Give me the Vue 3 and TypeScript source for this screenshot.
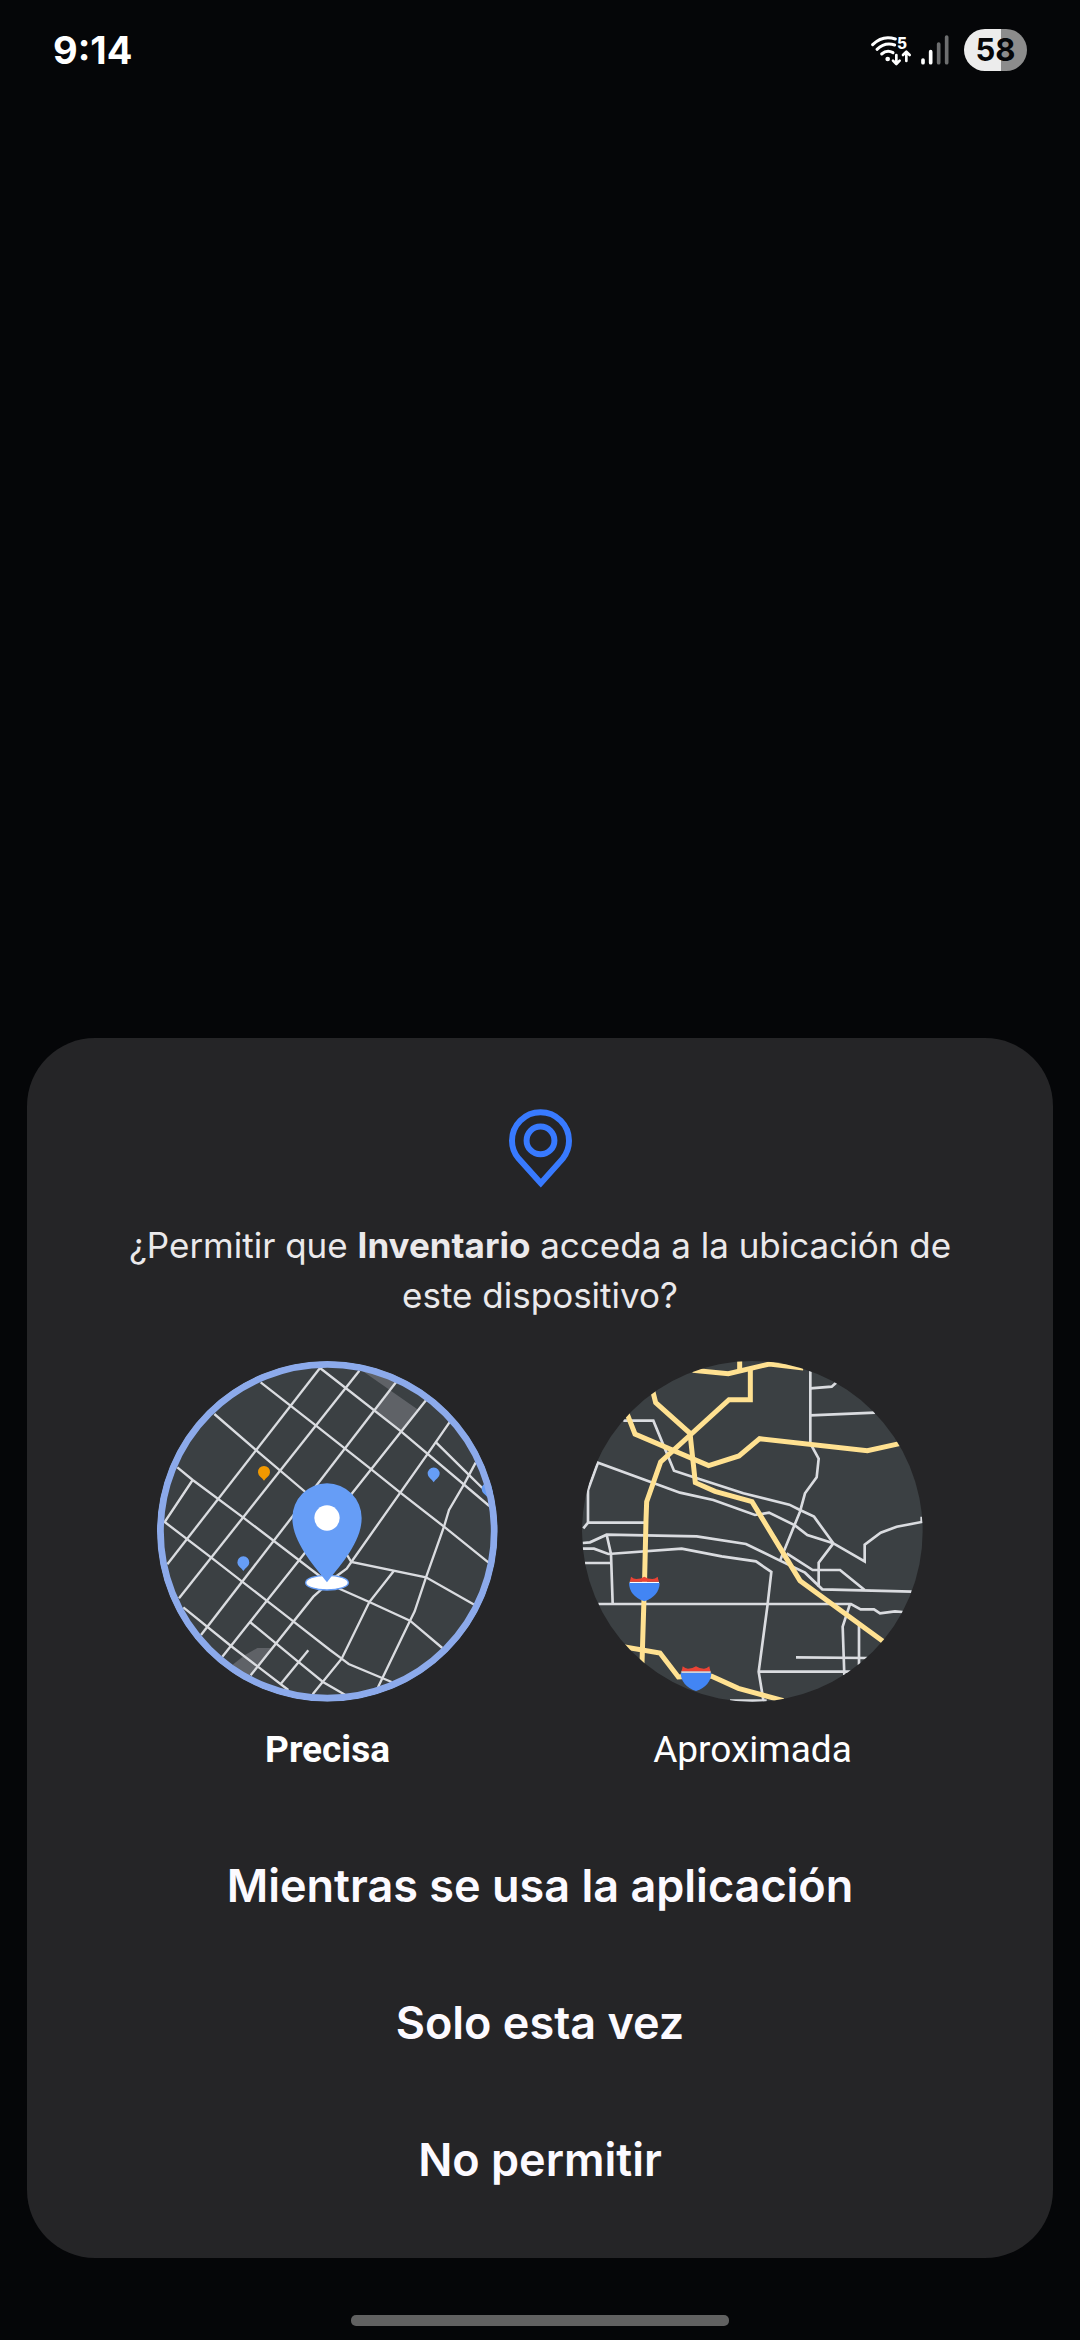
<script setup lang="ts">
import { ref } from 'vue'

type Accuracy = 'precise' | 'coarse'

const accuracy = ref<Accuracy>('precise')
const batteryLevel = 58
const actions: string[] = ['Mientras se usa la aplicación', 'Solo esta vez', 'No permitir']

const streets: string[] = [
  '510,54 52,643',
  '628,62 87,745',
  '738,97 153,855',
  '828,151 604,433 446,632 217,920',
  '900,215 834,310 604,636 590,656 560,678 490,740 302,976',
  '732,662 658,756 575,926 488,1033',
  '977,338 942,403 897,480 882,530 828,682 794,784 780,812 684,1012',
  '475,901 392,1002',
  '510,54 587,114 753,244 1018,468',
  '332,97 498,227 664,358 751,428 882,530 1015,637',
  '193,192 319,301 465,425 590,613 604,636 828,682 973,764',
  '82,352 128,390 280,503 505,675 570,717 658,756 780,812 877,894',
  '128,390 44,516 184,623 350,752 430,814 540,900 575,926 596,942 725,996',
  '300,816 447,937 519,996 585,1034',
  '100,772 243,888 415,1020',
  '858,277 956,374 997,414',
]

const roads: string[] = [
  '721,60 721,280 746,326 740,382 705,430 690,485 630,632',
  '721,115 785,110 800,97',
  '721,196 915,188',
  '160,212 250,212 312,362 360,378 520,430 658,464 690,480 732,500 790,580 884,634 884,584 932,548 980,530 1055,516 1055,500',
  '790,580 746,638 746,710',
  '40,535 54,518 54,420 84,338 330,428 430,450 555,495 597,488 675,526 712,555 790,580',
  '54,518 225,518',
  '38,579 60,577 110,554 380,559 528,582 630,632 705,668 757,718 1025,725',
  '650,610 728,660 810,660 884,720',
  '38,596 72,596 115,612 335,596 455,619 558,634 604,666 592,770 566,965 580,1050',
  '110,554 123,612 128,760',
  '45,639 125,639',
  '85,762 843,762 872,778 912,778 930,790 975,784 998,786',
  '840,762 818,830 823,975',
  '867,825 867,945',
  '678,922 892,924',
  '566,965 842,965',
  '480,1052 590,1052',
]

const highways: string[] = [
  '368,61 475,71 598,42 700,54',
  '509,30 509,62',
  '541,56 541,149 477,149 272,336 230,455 228,510 224,680 216,940',
  '248,122 257,158 360,250 376,398 435,424 546,455 690,692 945,878',
  '170,188 195,252 416,347 507,318 569,266 892,302 992,280',
  '160,890 270,909 325,981 378,978 425,979 505,1015 640,1052',
]

const shields: string[] = ['translate(177 680)', 'translate(332 949)']
const smallPins = [
  { x: 342, y: 367, color: '#f29900' },
  { x: 851, y: 372, color: '#669df6' },
  { x: 280, y: 638, color: '#669df6' },
  { x: 1013, y: 418, color: '#669df6' },
]
</script>

<template>
  <div class="screen">
    <header class="status">
      <time class="clock">9:14</time>
      <div class="indicators">
        <svg class="wifi" viewBox="95 75 123 93" aria-label="Wi-Fi">
          <g fill="none" stroke="#fff" stroke-width="9" stroke-linecap="round">
            <path d="M100 104Q130 74 168 87" />
            <path d="M113 118Q137 95 166 105" />
            <path d="M127 132Q143 118 161 128" />
          </g>
          <circle cx="145" cy="147" r="7" fill="#fff" />
          <g fill="none" stroke="#fff" stroke-width="8" stroke-linecap="round" stroke-linejoin="round">
            <path d="M171 135V161M161 152L171 162L181 152" />
            <path d="M201 153V127M191 135L201 125L211 135" />
          </g>
          <text x="173" y="117" class="band">5</text>
        </svg>
        <svg class="signal" viewBox="244 74 84 90" aria-label="Señal móvil">
          <g stroke-width="11" stroke-linecap="round">
            <path d="M250 149V157M273 124V157" stroke="#fff" />
            <path d="M297 101V157M321 80V157" stroke="#6d6e6f" />
          </g>
        </svg>
        <div class="battery" :style="{ '--level': batteryLevel + '%' }">{{ batteryLevel }}</div>
      </div>
    </header>

    <main class="sheet">
      <svg class="place" viewBox="84 58 190 237" aria-hidden="true">
        <g fill="none" stroke="#387aff" stroke-width="18">
          <path d="M180 281L113 207C101 193 93 176 93 153A86 86 0 0 1 265 153C265 176 257 193 246 207Z" />
          <circle cx="179" cy="152" r="42" />
        </g>
      </svg>
      <h1 class="question">¿Permitir que <b>Inventario</b> acceda a la ubicación de este dispositivo?</h1>

      <div class="options" role="radiogroup" aria-label="Precisión de la ubicación">
        <label class="option">
          <input v-model="accuracy" type="radio" name="accuracy" value="precise" />
          <svg class="map" viewBox="21 33 1023 1023" aria-hidden="true">
            <clipPath id="precise-clip"><circle cx="532" cy="544" r="511" /></clipPath>
            <g clip-path="url(#precise-clip)">
              <rect x="21" y="33" width="1023" height="1023" fill="#3b4043" />
              <path d="M630 58L802 178L753 244L673 182L738 97V50ZM240 950L285 915L322 894H368L302 976L270 1000Z" fill="#5f6267" />
              <g class="street"><polyline v-for="p in streets" :key="p" :points="p" /></g>
              <path
                v-for="p in smallPins"
                :key="p.x"
                :transform="`translate(${p.x} ${p.y})`"
                d="M0 25Q-5 17 -11 13A18 18 0 1 1 11 13Q5 17 0 25Z"
                :fill="p.color"
              />
              <ellipse cx="531" cy="698" rx="64" ry="22" fill="#fff" stroke="#669df6" stroke-width="4" />
              <path d="M531 697C495 650 427 578 427 504A104 104 0 0 1 635 504C635 578 567 650 531 697Z" fill="#669df6" />
              <circle cx="531" cy="504" r="38" fill="#fff" />
              <circle v-if="accuracy === 'precise'" cx="532" cy="544" r="501" fill="none" stroke="#8caaeb" stroke-width="21" />
            </g>
          </svg>
          <span>Precisa</span>
        </label>
        <label class="option">
          <input v-model="accuracy" type="radio" name="accuracy" value="coarse" />
          <svg class="map" viewBox="36 33 1023 1023" aria-hidden="true">
            <clipPath id="coarse-clip"><circle cx="547" cy="544" r="511" /></clipPath>
            <g clip-path="url(#coarse-clip)">
              <rect x="36" y="33" width="1023" height="1023" fill="#3b4043" />
              <g class="road"><polyline v-for="p in roads" :key="p" :points="p" /></g>
              <g class="highway"><polyline v-for="p in highways" :key="p" :points="p" /></g>
              <g v-for="s in shields" :key="s" :transform="s">
                <path d="M0 19H92Q91 58 46 74Q1 58 0 19Z" fill="#4285f4" />
                <path d="M2 15H90V19H2Z" fill="#fff" />
                <path d="M2 15Q5 8 6 0Q14 7 22 7Q36 7 46 0Q56 7 70 7Q78 7 86 0Q87 8 90 15Z" fill="#ea4335" />
              </g>
              <circle v-if="accuracy === 'coarse'" cx="547" cy="544" r="501" fill="none" stroke="#8caaeb" stroke-width="21" />
            </g>
          </svg>
          <span>Aproximada</span>
        </label>
      </div>

      <div class="actions">
        <button v-for="label in actions" :key="label" type="button">{{ label }}</button>
      </div>
    </main>

    <div class="home-bar"></div>
  </div>
</template>

<style>
body {
  background: #050608;
}
</style>

<style scoped>
.screen {
  box-sizing: border-box;
  min-height: 100vh;
  display: flex;
  flex-direction: column;
  background: #050608;
  color: #fcfaff;
  font-family: Inter, "Noto Sans", sans-serif;
}
.status {
  display: flex;
  align-items: center;
  justify-content: space-between;
  height: 100px;
  padding: 0 53px;
}
.clock {
  color: #fff;
  font-size: 38px;
  font-weight: 700;
}
.indicators {
  display: flex;
  align-items: center;
}
.wifi {
  width: 41px;
  height: 31px;
}
.band {
  font-size: 46px;
  font-weight: 800;
  fill: #fff;
}
.signal {
  width: 28px;
  height: 30px;
  margin: 0 15px 0 9px;
}
.battery {
  width: 63px;
  height: 42px;
  border-radius: 21px;
  background: linear-gradient(to right, #ececec var(--level), #8c8c8c var(--level));
  color: #050608;
  font-size: 31px;
  font-weight: 700;
  line-height: 42px;
  text-align: center;
}
.sheet {
  display: flex;
  flex-direction: column;
  align-items: center;
  margin: auto 27px 0;
  padding: 71px 72px 30px;
  border-radius: 68px;
  background: #252527;
}
.place {
  width: 63px;
  height: 79px;
}
.question {
  margin: 32px 0 41px;
  color: #ebe9eb;
  font-size: 35px;
  font-weight: 400;
  line-height: 50px;
  text-align: center;
}
.question b {
  font-weight: 700;
}
.options {
  display: flex;
  gap: 84px;
}
.option {
  position: relative;
  display: flex;
  flex-direction: column;
  align-items: center;
  gap: 23px;
  color: #fff;
  font-family: Roboto, sans-serif;
  font-size: 37px;
  line-height: 50px;
  cursor: pointer;
}
.option input {
  position: absolute;
  inset: 0;
  margin: 0;
  opacity: 0;
}
.option:has(input:checked) {
  font-weight: 700;
}
.map {
  width: 341px;
  height: 341px;
}
.street,
.road,
.highway {
  fill: none;
  stroke: #dadce0;
  stroke-width: 7;
}
.road {
  stroke-width: 8;
}
.highway {
  stroke: #ffe191;
  stroke-width: 15;
}
.actions {
  display: flex;
  flex-direction: column;
  align-self: stretch;
  margin-top: 42px;
}
.actions button {
  height: 137px;
  padding: 0;
  border: 0;
  background: none;
  color: inherit;
  font-family: inherit;
  font-size: 45px;
  font-weight: 600;
}
.home-bar {
  align-self: center;
  width: 35%;
  height: 11px;
  margin: 57px 0 14px;
  border-radius: 5px;
  background: #616161;
}
</style>
